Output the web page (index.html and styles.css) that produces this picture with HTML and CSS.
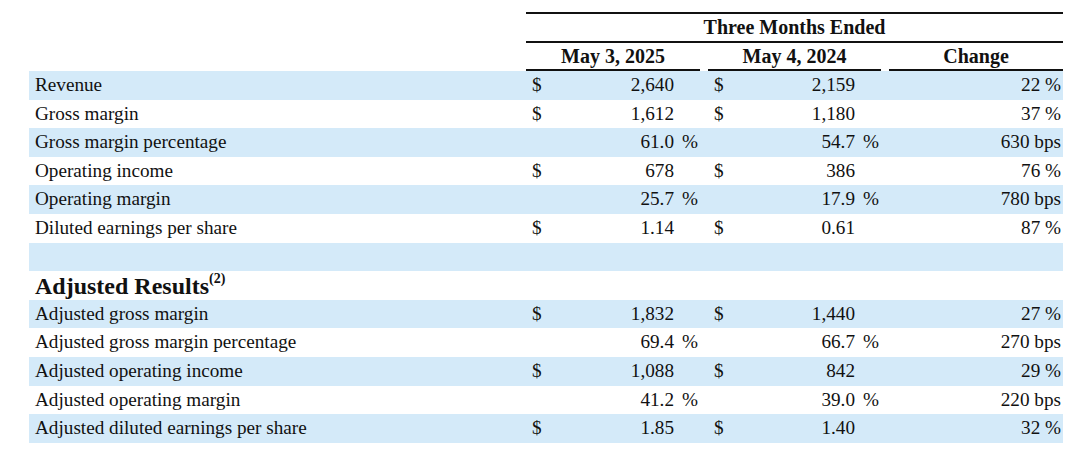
FILE: index.html
```html
<!DOCTYPE html>
<html>
<head>
<meta charset="utf-8">
<link rel="stylesheet" href="styles.css">
</head>
<body>
<div class="page">
  <div class="head1">
    <div class="head1-cell">Three Months Ended</div>
  </div>
  <div class="head2 grid">
    <div></div>
    <div class="hcell">May 3, 2025</div>
    <div class="hcell">May 4, 2024</div>
    <div class="hcell">Change</div>
  </div>

  <div class="row grid band">
    <div class="label">Revenue</div>
    <div class="val"><span class="cur">$</span><span class="num">2,640</span><span class="suf"></span></div>
    <div class="val"><span class="cur">$</span><span class="num">2,159</span><span class="suf"></span></div>
    <div class="chg">22 %</div>
  </div>
  <div class="row grid">
    <div class="label">Gross margin</div>
    <div class="val"><span class="cur">$</span><span class="num">1,612</span><span class="suf"></span></div>
    <div class="val"><span class="cur">$</span><span class="num">1,180</span><span class="suf"></span></div>
    <div class="chg">37 %</div>
  </div>
  <div class="row grid band">
    <div class="label">Gross margin percentage</div>
    <div class="val"><span class="cur"></span><span class="num">61.0</span><span class="suf">%</span></div>
    <div class="val"><span class="cur"></span><span class="num">54.7</span><span class="suf">%</span></div>
    <div class="chg">630 bps</div>
  </div>
  <div class="row grid">
    <div class="label">Operating income</div>
    <div class="val"><span class="cur">$</span><span class="num">678</span><span class="suf"></span></div>
    <div class="val"><span class="cur">$</span><span class="num">386</span><span class="suf"></span></div>
    <div class="chg">76 %</div>
  </div>
  <div class="row grid band">
    <div class="label">Operating margin</div>
    <div class="val"><span class="cur"></span><span class="num">25.7</span><span class="suf">%</span></div>
    <div class="val"><span class="cur"></span><span class="num">17.9</span><span class="suf">%</span></div>
    <div class="chg">780 bps</div>
  </div>
  <div class="row grid">
    <div class="label">Diluted earnings per share</div>
    <div class="val"><span class="cur">$</span><span class="num">1.14</span><span class="suf"></span></div>
    <div class="val"><span class="cur">$</span><span class="num">0.61</span><span class="suf"></span></div>
    <div class="chg">87 %</div>
  </div>
  <div class="row grid band">
    <div class="label"></div>
    <div></div>
    <div></div>
    <div></div>
  </div>
  <div class="row grid">
    <div class="label section">Adjusted Results<sup class="note">(2)</sup></div>
    <div></div>
    <div></div>
    <div></div>
  </div>
  <div class="row grid band">
    <div class="label">Adjusted gross margin</div>
    <div class="val"><span class="cur">$</span><span class="num">1,832</span><span class="suf"></span></div>
    <div class="val"><span class="cur">$</span><span class="num">1,440</span><span class="suf"></span></div>
    <div class="chg">27 %</div>
  </div>
  <div class="row grid">
    <div class="label">Adjusted gross margin percentage</div>
    <div class="val"><span class="cur"></span><span class="num">69.4</span><span class="suf">%</span></div>
    <div class="val"><span class="cur"></span><span class="num">66.7</span><span class="suf">%</span></div>
    <div class="chg">270 bps</div>
  </div>
  <div class="row grid band">
    <div class="label">Adjusted operating income</div>
    <div class="val"><span class="cur">$</span><span class="num">1,088</span><span class="suf"></span></div>
    <div class="val"><span class="cur">$</span><span class="num">842</span><span class="suf"></span></div>
    <div class="chg">29 %</div>
  </div>
  <div class="row grid">
    <div class="label">Adjusted operating margin</div>
    <div class="val"><span class="cur"></span><span class="num">41.2</span><span class="suf">%</span></div>
    <div class="val"><span class="cur"></span><span class="num">39.0</span><span class="suf">%</span></div>
    <div class="chg">220 bps</div>
  </div>
  <div class="row grid band">
    <div class="label">Adjusted diluted earnings per share</div>
    <div class="val"><span class="cur">$</span><span class="num">1.85</span><span class="suf"></span></div>
    <div class="val"><span class="cur">$</span><span class="num">1.40</span><span class="suf"></span></div>
    <div class="chg">32 %</div>
  </div>
</div>
</body>
</html>
```
FILE: styles.css
```css
html, body {
  margin: 0;
  padding: 0;
  background: #ffffff;
}
body {
  font-family: "Liberation Serif", "Times New Roman", serif;
  font-size: 19.2px;
  color: #111111;
}
.page {
  padding: 12px 0 0 29px;
  width: 1034px;
}
.grid {
  display: grid;
  grid-template-columns: 489px 174px 173px 174px;
  column-gap: 8px;
}
.head1 {
  margin-left: 497px;
  border-top: 2px solid #111;
  border-bottom: 2px solid #111;
  height: 27px;
  display: flex;
  align-items: center;
  justify-content: center;
}
.head1-cell {
  font-weight: bold;
  font-size: 20px;
  line-height: 27px;
}
.head2 {
  height: 28px;
}
.hcell {
  font-weight: bold;
  font-size: 20px;
  text-align: center;
  line-height: 26px;
  border-bottom: 2px solid #111;
}
.row {
  height: 28.6px;
  line-height: 28.6px;
}
.band {
  background: #d4eaf9;
}
.label {
  padding-left: 6px;
  white-space: nowrap;
}
.section {
  font-weight: bold;
  font-size: 24px;
  line-height: 30px;
}
.note {
  font-size: 14px;
  line-height: 0;
  vertical-align: 11px;
}
.val {
  display: flex;
  padding-left: 6px;
}
.cur {
  width: 14px;
}
.num {
  flex: 1;
  text-align: right;
}
.suf {
  width: 26px;
  padding-left: 8px;
  box-sizing: border-box;
}
.chg {
  text-align: right;
  padding-right: 2px;
}
```
